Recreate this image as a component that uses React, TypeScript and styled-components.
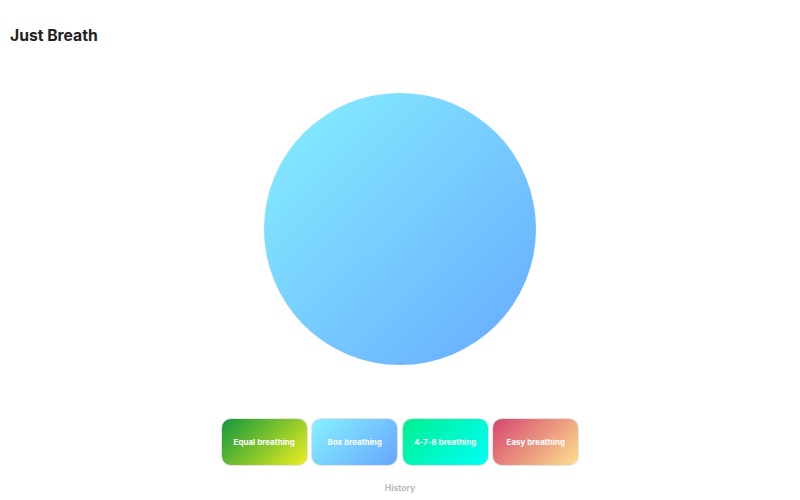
import styled, { createGlobalStyle } from 'styled-components';

const GlobalStyle = createGlobalStyle`
  html, body {
    margin: 0;
    padding: 0;
    background: #ffffff;
  }
  body {
    font-family: Inter, "Noto Sans", "Liberation Sans", sans-serif;
    -webkit-font-smoothing: antialiased;
  }
`;

type Exercise = {
  label: string;
  from: string;
  to: string;
};

const exercises: Exercise[] = [
  { label: 'Equal breathing', from: '#11973c', to: '#ecef1f' },
  { label: 'Box breathing', from: '#86f1ff', to: '#66a6ff' },
  { label: '4-7-8 breathing', from: '#00f08f', to: '#00fff8' },
  { label: 'Easy breathing', from: '#d7456f', to: '#fde18e' },
];

export default function App() {
  return (
    <>
      <GlobalStyle />
      <Page>
        <Title>Just Breath</Title>
        <Stage>
          <Bubble />
        </Stage>
        <ExerciseRow>
          {exercises.map((item) => (
            <ExerciseButton key={item.label} $from={item.from} $to={item.to}>
              {item.label}
            </ExerciseButton>
          ))}
        </ExerciseRow>
        <HistoryLink>History</HistoryLink>
      </Page>
    </>
  );
}

const Page = styled('div')`
  display: flex;
  flex-direction: column;
  width: 100%;
  height: 500px;
  box-sizing: border-box;
  overflow: hidden;
`;

const Title = styled('h1')`
  margin: 25px 10px 0;
  font-size: 15.7px;
  line-height: 22px;
  font-weight: 700;
  color: #222222;
`;

const Stage = styled('div')`
  display: flex;
  justify-content: center;
  margin-top: 46px;
`;

const Bubble = styled('div')`
  width: 272px;
  height: 272px;
  border-radius: 50%;
  background: linear-gradient(135deg, #87f1ff 0%, #66a8ff 100%);
`;

const ExerciseRow = styled('div')`
  display: flex;
  justify-content: center;
  gap: 3.5px;
  margin-top: 53px;
`;

const ExerciseButton = styled('button')<{ $from: string; $to: string }>`
  display: flex;
  align-items: center;
  justify-content: center;
  width: 87px;
  height: 48px;
  padding: 0;
  border: 1px solid #e4e4e4;
  border-radius: 10px;
  background: linear-gradient(135deg, ${({ $from }) => $from} 0%, ${({ $to }) => $to} 100%);
  color: #ffffff;
  font-family: Inter, "Noto Sans", sans-serif;
  font-size: 8px;
  font-weight: 700;
  cursor: pointer;
`;

const HistoryLink = styled('div')`
  margin-top: 16px;
  text-align: center;
  font-size: 8.5px;
  line-height: 12px;
  font-weight: 700;
  color: #bbbbbb;
`;
